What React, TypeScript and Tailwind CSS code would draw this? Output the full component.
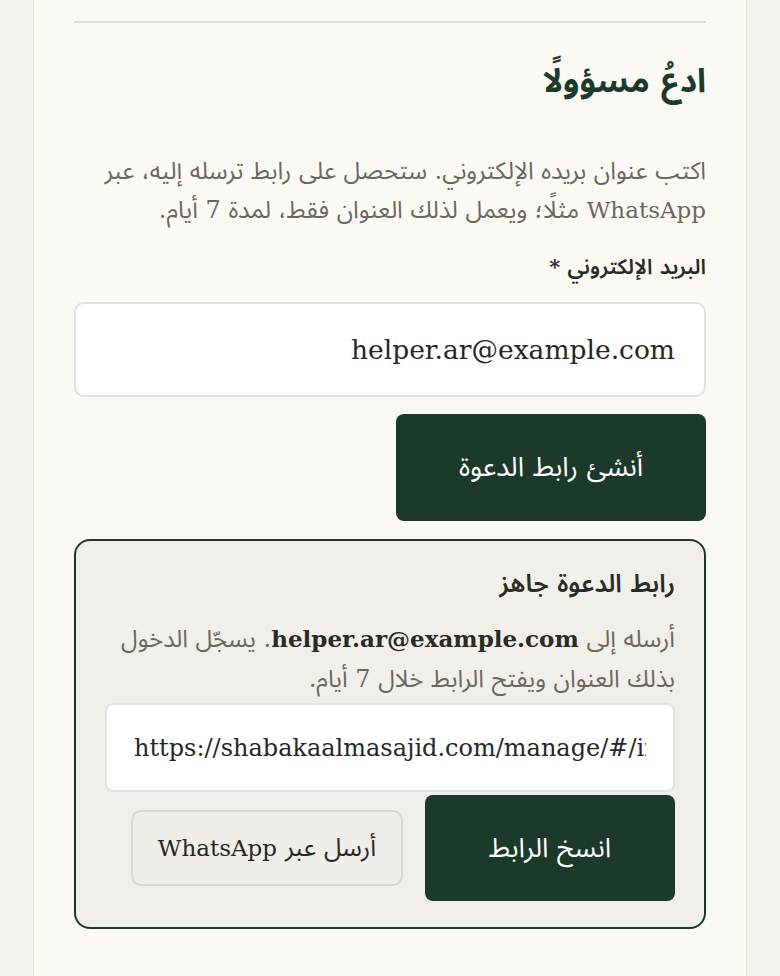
import React from "react";

export default function App() {
  const font = { fontFamily: '"DejaVu Serif", "Noto Sans Arabic", "Noto Naskh Arabic", serif' };
  return (
    <div dir="rtl" className="min-h-screen bg-[#f4f1ec] overflow-hidden" style={font}>
      <div className="mx-[33px] min-h-[976px] border-x border-[#ece3d0] bg-[#fbf9f4] px-[40px] pt-[21px]">
        <div className="h-[2px] bg-[#deddd8]" />
        <h2 className="mt-[30px] text-[33px] font-bold leading-[56px] text-[#1c3a2a]">
          ادعُ مسؤولًا
        </h2>
        <p className="mt-[43px] text-[24px] leading-[39px] text-[#6b675f]">
          اكتب عنوان بريده الإلكتروني. ستحصل على رابط ترسله إليه، عبر <span className="text-[23px]">WhatsApp</span> مثلًا؛ ويعمل لذلك العنوان فقط، لمدة 7 أيام.
        </p>
        <label className="mt-[22px] block text-[21px] font-semibold leading-[30px] text-[#2a2a27]">
          البريد الإلكتروني *
        </label>
        <div className="mt-[20px] flex h-[95px] items-center rounded-[10px] border-2 border-[#e2e0da] bg-white px-[29px] text-[26.5px] text-[#262626]">
          <span dir="ltr">helper.ar@example.com</span>
        </div>
        <button className="mt-[17px] block h-[107px] w-[310px] rounded-[8px] bg-[#1c3a2a] text-[27px] text-white">
          أنشئ رابط الدعوة
        </button>
        <div className="mt-[18px] rounded-[16px] border-2 border-[#1c3a2a] bg-[#f0efea] px-[29px] pb-[26px] pt-[26px]">
          <h3 className="text-[25px] font-semibold leading-[34px] text-[#2a2a27]">رابط الدعوة جاهز</h3>
          <p className="mt-[18px] text-[24px] leading-[40px] text-[#6b675f]">
            أرسله إلى <strong className="font-bold text-[#2a2a27] text-[23px]">helper.ar@example.com</strong>. يسجّل الدخول بذلك العنوان ويفتح الرابط خلال 7 أيام.
          </p>
          <input
            readOnly
            dir="ltr"
            value="https://shabakaalmasajid.com/manage/#/invite/8f2a7c1e"
            className="mt-[4px] block h-[89px] w-full rounded-[8px] border-2 border-[#e6e4de] bg-white px-[27px] text-[24px] text-[#262626] outline-none"
            style={font}
          />
          <div className="mt-[3px] flex flex-wrap items-center gap-[22px]">
            <button className="h-[106px] w-[250px] rounded-[8px] bg-[#1c3a2a] text-[27px] text-white">انسخ الرابط</button>
            <button className="h-[76px] w-[272px] rounded-[10px] border-2 border-[#d9d8d2] bg-[#efeee9] text-[25px] text-[#262626]">
              أرسل عبر <span className="text-[23px]">WhatsApp</span>
            </button>
          </div>
        </div>
      </div>
    </div>
  );
}
